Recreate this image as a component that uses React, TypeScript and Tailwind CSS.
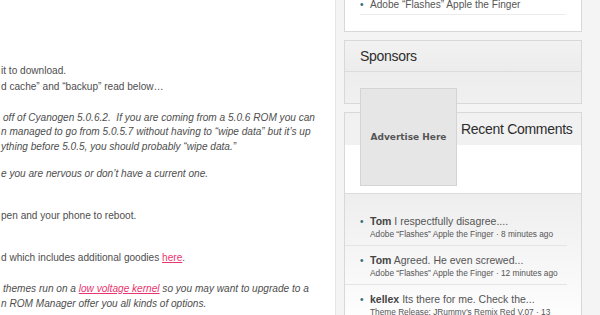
import React from "react";

const Pink = ({ children }: { children: React.ReactNode }) => (
  <span className="text-[#e8346f] underline underline-offset-1">{children}</span>
);

function Line({ children, italic, mt }: { children: React.ReactNode; italic?: boolean; mt: string }) {
  return (
    <div className={`h-[15px] leading-[15px] whitespace-nowrap ${italic ? "italic" : ""} ${mt}`}>{children}</div>
  );
}

function Comment({ who, text, sub, last }: { who: string; text: string; sub: string; last?: boolean }) {
  return (
    <div className={`flex pl-[15px] mr-[14px] ${last ? "" : "border-b border-[#e4e4e4]"} pb-[5px] mb-[7px]`}>
      <div className="w-[10px] text-[#2f6a75] text-[10px] leading-[16px]">•</div>
      <div className="flex flex-col">
        <div className="text-[10.5px] leading-[15px] text-[#555] whitespace-nowrap">
          <span className="font-bold text-[#444]">{who}</span> {text}
        </div>
        <div className="text-[8.3px] leading-[11px] text-[#555] whitespace-nowrap">{sub}</div>
      </div>
    </div>
  );
}

export default function App() {
  return (
    <div
      className="w-[600px] h-[315px] overflow-hidden flex bg-white"
      style={{ fontFamily: '"Liberation Sans", Arial, sans-serif' }}
    >
      <div className="w-[335px] shrink-0 bg-white text-[10.1px] text-[#4e4e4e] pl-[1px] pt-[63px] overflow-hidden">
        <Line mt="mt-0">it to download.</Line>
        <Line mt="mt-[1px]">d cache” and “backup” read below…</Line>
        <Line italic mt="mt-[16px]">
          <span className="pl-[2px]">off of Cyanogen 5.0.6.2.&nbsp; If you are coming from a 5.0.6 ROM you can</span>
        </Line>
        <Line italic mt="mt-[-1px]">n managed to go from 5.0.5.7 without having to “wipe data” but it’s up</Line>
        <Line italic mt="mt-0">ything before 5.0.5, you should probably “wipe data.”</Line>
        <Line italic mt="mt-[12px]">e you are nervous or don’t have a current one.</Line>
        <Line mt="mt-[27px]">pen and your phone to reboot.</Line>
        <Line mt="mt-[27px]">
          d which includes additional goodies <Pink>here</Pink>.
        </Line>
        <Line italic mt="mt-[16px]">
          <span className="pl-[2px]">
            themes run on a <Pink>low voltage kernel</Pink> so you may want to upgrade to a
          </span>
        </Line>
        <Line italic mt="mt-0">n ROM Manager offer you all kinds of options.</Line>
      </div>

      <div className="relative flex-1 bg-[#f4f4f4] border-l border-[#e6e6e6] pl-[8px] flex flex-col">
        {/* Popular box */}
        <div className="w-[238px] h-[32px] bg-white border-x border-b border-[#d8d8d8] shrink-0">
          <div className="mx-[15px] mt-[-2px] flex border-b border-[#ececec] pb-[2px]">
            <div className="w-[10px] text-[#2f6a75] text-[10px] leading-[14px]">•</div>
            <div className="text-[10.1px] leading-[14px] text-[#555] whitespace-nowrap">
              Adobe “Flashes” Apple the Finger
            </div>
          </div>
        </div>

        {/* Sponsors */}
        <div className="w-[238px] h-[64px] mt-[8px] border border-[#d8d8d8] bg-[#efefef] shrink-0 flex flex-col">
          <div className="h-[31px] border-b border-[#dcdcdc] bg-gradient-to-b from-[#f2f2f2] to-[#ececec] pl-[15px] flex items-center">
            <span className="text-[14px] text-[#2d2d2d] tracking-[-0.3px] pt-[1px]">Sponsors</span>
          </div>
          <div className="flex-1 bg-gradient-to-b from-[#ededed] to-[#f0f0f0]" />
        </div>

        {/* Recent Comments */}
        <div className="w-[238px] mt-[8px] border border-[#d8d8d8] bg-white flex-1 flex flex-col">
          <div className="h-[32px] bg-[#f1f1f1] pl-[116px] flex items-center">
            <span className="text-[14px] text-[#2d2d2d] tracking-[-0.3px] whitespace-nowrap">Recent Comments</span>
          </div>
          <div className="h-[49px] bg-white border-b border-[#dddddd]" />
          <div className="flex-1 bg-gradient-to-b from-[#eeeeee] to-white pt-[20px]">
            <Comment who="Tom" text="I respectfully disagree...." sub="Adobe “Flashes” Apple the Finger · 8 minutes ago" />
            <Comment who="Tom" text="Agreed. He even screwed..." sub="Adobe “Flashes” Apple the Finger · 12 minutes ago" />
            <Comment who="kellex" text="Its there for me. Check the..." sub="Theme Release: JRummy’s Remix Red V.07 · 13" last />
          </div>
        </div>

        {/* Ad */}
        <div className="absolute left-[24px] top-[88px] w-[97px] h-[98px] bg-[#e6e6e6] border border-[#d4d4d4] flex items-center justify-center">
          <span
            className="text-[9px] font-bold text-[#555] pt-[2px]"
            style={{ fontFamily: '"DejaVu Sans", Verdana, sans-serif' }}
          >
            Advertise Here
          </span>
        </div>
      </div>
    </div>
  );
}
